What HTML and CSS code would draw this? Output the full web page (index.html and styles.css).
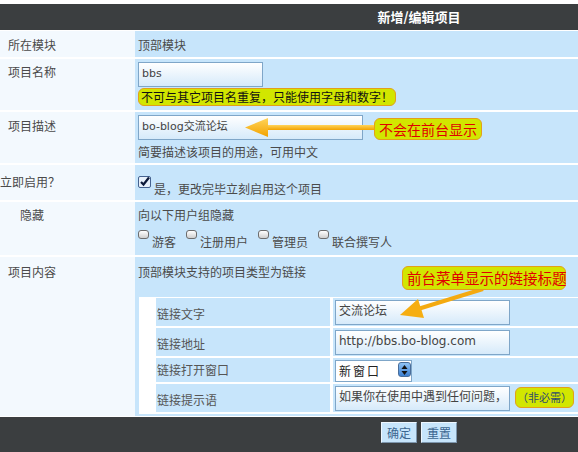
FILE: index.html
```html
<!DOCTYPE html>
<html lang="zh-CN">
<head>
<meta charset="utf-8">
<title>新增/编辑项目</title>
<link rel="stylesheet" href="styles.css">
</head>
<body>
<div class="page">
  <div class="topbar">新增/编辑项目</div>

  <div class="row r1">
    <div class="lab">所在模块</div>
    <div class="val">顶部模块</div>
  </div>

  <div class="row r2">
    <div class="lab">项目名称</div>
    <div class="val">
      <div class="inp w125">bbs</div>
      <div class="note">不可与其它项目名重复，只能使用字母和数字！</div>
    </div>
  </div>

  <div class="row r3">
    <div class="lab">项目描述</div>
    <div class="val">
      <div class="line">
        <div class="inp w225">bo-blog交流论坛</div>
        <span class="callout c1">不会在前台显示</span>
      </div>
      <div class="hint">简要描述该项目的用途，可用中文</div>
    </div>
  </div>

  <div class="row r4">
    <div class="lab">立即启用？</div>
    <div class="val">
      <div class="chk">
        <svg class="cbox" width="13" height="12" viewBox="0 0 13 12"><rect x="0.5" y="0.5" width="12" height="11" rx="1.5" fill="#e8f1fb" stroke="#45628f"/><path d="M3 6 L5.5 8.5 L11 1.5" fill="none" stroke="#0d1a3a" stroke-width="2.2"/></svg>
        <span class="ctext">是，更改完毕立刻启用这个项目</span>
      </div>
    </div>
  </div>

  <div class="row r5">
    <div class="lab">隐藏</div>
    <div class="val">
      <div>向以下用户组隐藏</div>
      <div class="groups">
        <span class="grp"><span class="ubox"></span><span class="gtext">游客</span></span>
        <span class="grp"><span class="ubox"></span><span class="gtext">注册用户</span></span>
        <span class="grp"><span class="ubox"></span><span class="gtext">管理员</span></span>
        <span class="grp"><span class="ubox"></span><span class="gtext">联合撰写人</span></span>
      </div>
    </div>
  </div>

  <div class="row r6">
    <div class="lab">项目内容</div>
    <div class="val">
      <div>顶部模块支持的项目类型为链接</div>
      <div class="inner">
        <div class="ilab h28">链接文字</div>
        <div class="ival h28"><div class="inp w175">交流论坛</div></div>
        <div class="ilab h28">链接地址</div>
        <div class="ival h28"><div class="inp w175">http://bbs.bo-blog.com</div></div>
        <div class="ilab h24">链接打开窗口</div>
        <div class="ival h24"><div class="sel">新窗口<span class="spin"><svg width="9" height="12" viewBox="0 0 9 12"><path d="M4.5 1 L7.5 5 L1.5 5 Z M4.5 11 L7.5 7 L1.5 7 Z" fill="#111"/></svg></span></div></div>
        <div class="ilab h28">链接提示语</div>
        <div class="ival h28"><div class="inp w175 clip">如果你在使用中遇到任何问题，</div><span class="callout c3">（非必需）</span></div>
      </div>
    </div>
  </div>

  <div class="foot">
    <button class="btn">确定</button>
    <button class="btn">重置</button>
  </div>

  <span class="callout c2">前台菜单显示的链接标题</span>

  <svg class="arrows" width="838" height="452" viewBox="0 0 838 452">
    <defs>
      <linearGradient id="ag" x1="0" y1="0" x2="0" y2="1">
        <stop offset="0" stop-color="#ffd45a"/>
        <stop offset="1" stop-color="#f2a200"/>
      </linearGradient>
    </defs>
    <rect x="264" y="125" width="110" height="5" fill="url(#ag)"/>
    <polygon points="245,127.5 268,118 268,137" fill="url(#ag)"/>
    <line x1="483" y1="289" x2="418" y2="309" stroke="#f4aa10" stroke-width="4"/>
    <polygon points="400,315 418,299 424,318" fill="#f6ae12"/>
  </svg>
</div>
</body>
</html>
```
FILE: styles.css
```css
* { box-sizing: border-box; }
html, body { margin: 0; padding: 0; background: #fff; overflow: hidden; }
body {
  font-family: "Noto Sans CJK SC", "DejaVu Sans", sans-serif;
  font-size: 12px;
  color: #4a4a4a;
}
.page { position: relative; width: 838px; padding-top: 4px; }

.topbar {
  height: 26px;
  background: #3b3e40;
  color: #fff;
  font-weight: bold;
  font-size: 13px;
  line-height: 26px;
  text-align: center;
  margin-bottom: 1px;
}

.row { display: grid; grid-template-columns: 135px 1fr; margin-bottom: 2px; }
.lab { background: #f3f9fe; padding-left: 8px; line-height: 16px; }
.val { background: #c7e5fb; padding-left: 3px; line-height: 16px; }

.r1 { height: 26px; }
.r1 .lab, .r1 .val { padding-top: 6px; }
.r2 { height: 51px; }
.r2 .lab { padding-top: 5px; }
.r2 .val { padding-top: 3px; }
.r3 { height: 51px; }
.r3 .lab { padding-top: 6px; }
.r3 .val { padding-top: 3px; }
.r4 { height: 35px; }
.r4 .lab { padding-top: 9px; padding-left: 0; }
.r4 .val { padding-top: 11px; }
.r5 { height: 53px; }
.r5 .lab { padding-top: 5px; padding-left: 20px; }
.r5 .val { padding-top: 5px; }
.r6 { height: 159px; margin-bottom: 1px; }
.r6 .lab { padding-top: 7px; }
.r6 .val { padding-top: 7px; padding-left: 3px; }

.inp {
  height: 25px;
  border: 1px solid #7fa6c8;
  background: linear-gradient(#ffffff, #d6eafa);
  padding: 0 3px;
  font-family: "DejaVu Sans", "Noto Sans CJK SC", sans-serif;
  font-size: 11px;
  line-height: 21px;
  color: #444;
  white-space: nowrap;
  overflow: hidden;
}
.w125 { width: 125px; }
.w225 { width: 225px; }
.w175 { width: 175px; }
.inner .inp { font-size: 12px; font-family: "DejaVu Sans", "Noto Sans CJK SC", sans-serif; }
.clip { font-family: "Noto Sans CJK SC", sans-serif; }

.note {
  display: inline-block;
  margin-top: 1px;
  height: 18px;
  line-height: 16px;
  padding: 0 2px;
  background: #d2e600;
  border: 1px solid #e3a01a;
  border-radius: 6px;
  color: #111;
  font-size: 12px;
}

.line { display: flex; align-items: center; }
.hint { margin-top: 4px; }

.callout {
  display: inline-block;
  background: #d2e600;
  border: 1px solid #e3a01a;
  border-radius: 6px;
  color: #e00000;
  white-space: nowrap;
}
.c1 { margin-left: 11px; height: 22px; width: 108px; font-size: 14px; line-height: 20px; padding-left: 4px; margin-top: 2px; }
.c2 {
  position: absolute;
  left: 402px;
  top: 266px;
  width: 164px;
  height: 24px;
  font-size: 14.5px;
  line-height: 22px;
  padding-left: 4px;
  z-index: 3;
}
.c3 { margin-left: 5px; height: 21px; font-size: 11px; line-height: 19px; color: #2d4a6e; padding: 0 1px; margin-top: 1px; }

.chk { display: flex; align-items: flex-start; }
.cbox { flex: none; }
.ctext { margin-left: 3px; margin-top: 5px; }

.groups { display: flex; margin-top: 7px; gap: 10px; }
.grp { display: flex; align-items: flex-start; }
.ubox {
  width: 11px;
  height: 9px;
  border: 1px solid #6d6d6d;
  border-radius: 3px;
  background: linear-gradient(#ffffff, #cfcfcf);
  margin-right: 3px;
  flex: none;
}
.gtext { margin-top: 4px; }

.inner {
  margin-top: 17px;
  margin-left: 1px;
  background: #fff;
  padding: 1px 4px 2px 17px;
  display: grid;
  grid-template-columns: 174px 1fr;
  column-gap: 3px;
  row-gap: 2px;
}
.ilab { background: #c7e5fb; padding-left: 1px; display: flex; align-items: center; color: #555; }
.ival { background: #c7e5fb; padding: 2px 0 0 2px; display: flex; align-items: flex-start; }
.h28 { height: 28px; }
.h24 { height: 24px; }
.ilab.h28 { padding-top: 3px; }

.sel {
  position: relative;
  width: 77px;
  height: 22px;
  border: 1px solid #7fa6c8;
  background: #fff;
  padding-left: 3px;
  line-height: 19px;
  letter-spacing: 2px;
  color: #222;
}
.spin {
  position: absolute;
  right: 0;
  top: 1px;
  width: 13px;
  height: 15px;
  border-radius: 3px;
  background: linear-gradient(#8fc3f5, #3d7fd0);
  border: 1px solid #4a6e9a;
  display: flex;
  align-items: center;
  justify-content: center;
}

.foot {
  height: 40px;
  background: #3b3e40;
  display: flex;
  justify-content: center;
  gap: 4px;
  padding-top: 5px;
}
.btn {
  width: 36px;
  height: 21px;
  padding: 0;
  background: #c7e5fb;
  border: 1px solid #eef7ff;
  border-right-color: #7d96ad;
  border-bottom-color: #7d96ad;
  color: #3b6690;
  font-family: "Noto Sans CJK SC", sans-serif;
  font-size: 12px;
  line-height: 18px;
}

.arrows { position: absolute; left: 0; top: 0; z-index: 2; pointer-events: none; }
```
